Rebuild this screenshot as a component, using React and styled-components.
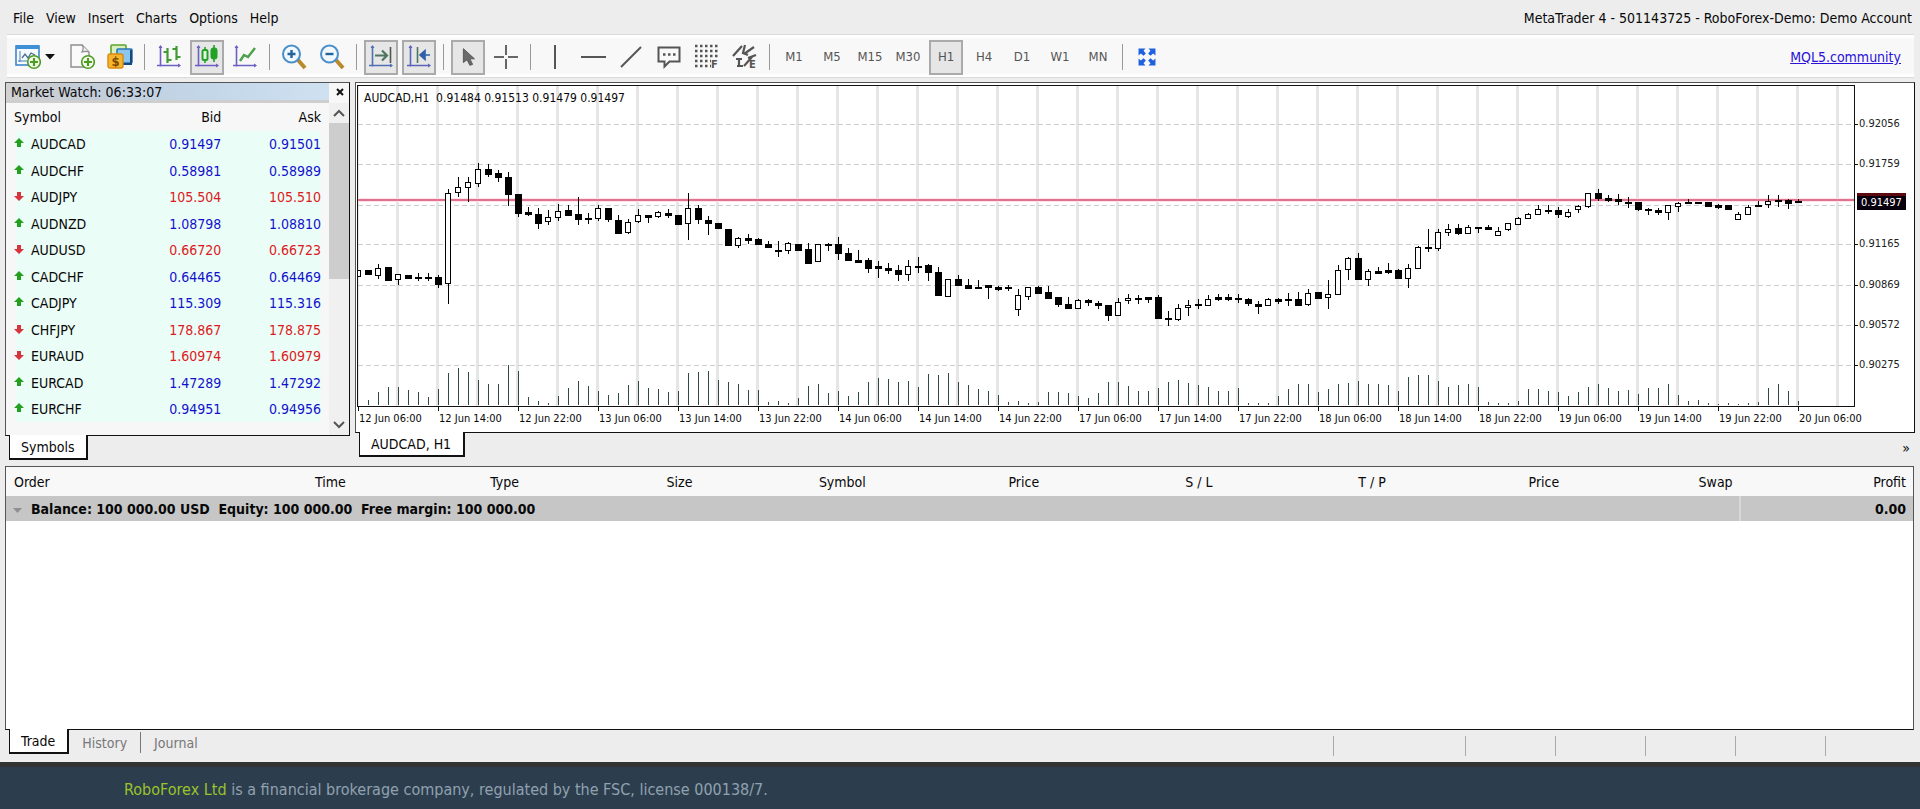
import React, { useState } from "react";
import styled, { createGlobalStyle } from "styled-components";

const GlobalStyle = createGlobalStyle`
  * {
    box-sizing: border-box;
  }

  body {
    margin: 0;
    background: #2c3e4e;
    color: #080808;
    font-family: "DejaVu Sans Condensed", "DejaVu Sans", Tahoma, sans-serif;
    font-size: 14px;
    line-height: 18px;
  }

  button {
    font: inherit;
    color: inherit;
    cursor: pointer;
  }
`;

const Page = styled.div`
  min-height: 100vh;
  display: flex;
  flex-direction: column;
`;

const Terminal = styled.main`
  flex: 1;
  display: flex;
  flex-direction: column;
  background: #ededed;
  border-bottom: 5px solid #333;
`;

const MenuBar = styled.header`
  height: 34px;
  display: flex;
  justify-content: space-between;
  align-items: center;
  padding: 2px 8px 0 7px;
`;

const Menu = styled.nav`
  display: flex;
`;

const MenuButton = styled.button`
  border: 0;
  background: none;
  padding: 0 6px;
`;

const Account = styled.span`
  white-space: nowrap;
`;

const Toolbar = styled.div`
  display: flex;
  align-items: center;
  gap: 4px;
  margin: 0 6px 4px 7px;
  padding: 3px 13px 1px 2px;
  height: 44px;
  background: #f8f8f8;
  border-top: 1px solid #dadada;
  border-bottom: 1px solid #dadada;
  box-shadow: inset 0 3px #fff, inset 0 -3px #fff;
`;

const ToolButton = styled.button`
  width: ${({ $wide }) => ($wide ? "52px" : "34px")};
  height: 35px;
  flex: none;
  display: flex;
  align-items: center;
  justify-content: center;
  gap: 4px;
  padding: 0;
  color: #555;
  border: ${({ $active }) => ($active ? "2px solid #aaa" : "0")};
  background: ${({ $active }) => ($active ? "#e6e6e6" : "none")};
`;

const TimeButton = styled(ToolButton)`
  font-size: 13px;
`;

const ToolSeparator = styled.span`
  width: 7px;
  height: 26px;
  flex: none;
  background: linear-gradient(#999, #999) center / 1px 100% no-repeat;
`;

const Community = styled.a`
  margin-left: auto;
  color: #2a12d8;
`;

const Workspace = styled.section`
  display: flex;
  align-items: flex-start;
  gap: 5px;
  padding: 0 5px;
  height: 384px;
`;

const Dock = styled.div`
  flex: ${({ $fill }) => ($fill ? "1" : "none")};
  width: ${({ $fill }) => ($fill ? "auto" : "345px")};
  min-width: 0;
`;

const Panel = styled.div`
  border: 1px solid #111;
  border-top-color: #555;
  border-left-color: #555;
`;

const WatchPanel = styled(Panel)`
  height: 354px;
  display: grid;
  grid-template-columns: 1fr 20px;
  grid-template-rows: 20px 1fr;
  background: #f7f7f7;
`;

const WatchTitle = styled.div`
  padding-left: 5px;
  background: linear-gradient(90deg, #d2d2d2 0, #c3ccd8 25%, #c2d6e8 60%, #cfe1f1 100%);
  border-bottom: 3px solid #cecece;
`;

const CloseButton = styled.button`
  display: flex;
  align-items: center;
  justify-content: center;
  border: 0;
  padding: 0 0 2px 2px;
  background: none;
`;

const QuoteTable = styled.table`
  width: 100%;
  height: fit-content;
  border-collapse: collapse;
  table-layout: fixed;

  th {
    height: 28px;
    padding: 0;
    font-weight: normal;
    text-align: right;
  }

  th:first-child {
    text-align: left;
    padding-left: 8px;
  }
`;

const QuoteRow = styled.tr`
  height: 26px;
  background: linear-gradient(#ebfdf7, #ebfdf7) 10px 0 / 305px 100% no-repeat;

  &:nth-child(even) {
    height: 27px;
  }
`;

const SymbolCell = styled.td`
  padding: 0 0 0 8px;

  svg {
    margin-right: 7px;
    vertical-align: 1px;
  }
`;

const PriceCell = styled.td`
  padding: 0;
  text-align: right;
  color: ${({ $up }) => ($up ? "#1212cc" : "#dc1a22")};

  & + & {
    padding-right: 8px;
  }
`;

const AskHead = styled.th`
  && {
    padding-right: 8px;
  }
`;

const Scrollbar = styled.div`
  display: flex;
  flex-direction: column;
  justify-content: space-between;
  align-items: center;
  background: #f0f0f0;
`;

const ScrollButton = styled.button`
  width: 20px;
  height: 20px;
  display: flex;
  align-items: center;
  justify-content: center;
  border: 0;
  padding: 0;
  background: none;
`;

const ScrollThumb = styled.div`
  width: 100%;
  height: 156px;
  margin-bottom: auto;
  background: #cdcdcd;
`;

const Tab = styled.button`
  height: 25px;
  margin: -1px 0 0 4px;
  padding: 0 12px 0 11px;
  background: #fff;
  border: 1px solid #111;
  border-width: 0 2px 2px 1px;
`;

const TabRow = styled.div`
  display: flex;
  justify-content: space-between;
  padding-right: 5px;
`;

const MoreButton = styled.button`
  border: 0;
  padding: 6px 0 0;
  background: none;
`;

const ChartPanel = styled(Panel)`
  height: 351px;
  padding: 2px 0 0 1px;
  background: #fff;
`;

const ChartGrid = styled.div`
  display: grid;
  grid-template-columns: 1fr 59px;
`;

const Plot = styled.div`
  position: relative;
  height: 322px;
  border: 1px solid #111;

  svg {
    display: block;
  }
`;

const PlotTitle = styled.div`
  position: absolute;
  top: 3px;
  left: 6px;
  font-size: 12px;
  white-space: pre;
`;

const TimeAxis = styled.div`
  display: flex;
  padding-left: 1px;
  overflow: hidden;
`;

const TimeLabel = styled.span`
  width: 80px;
  flex: none;
  height: 22px;
  padding: 3px 0 0 1px;
  font-size: 11px;
  white-space: nowrap;
  background: linear-gradient(#111, #111) 0 0 / 1px 4px no-repeat;
`;

const OrdersPanel = styled.section`
  flex: 1;
  margin: 0 6px 0 5px;
  background: #fff;
  border: 1px solid #555;
  border-bottom-color: #111;
`;

const OrdersTable = styled.table`
  width: 100%;
  table-layout: fixed;
  border-collapse: collapse;

  th {
    height: 29px;
    padding: 0 7px 0 0;
    text-align: right;
    font-weight: normal;
    background: #f8f8f8;
  }

  th:first-child {
    text-align: left;
    padding-left: 8px;
  }
`;

const BalanceRow = styled.tr`
  height: 25px;
  font-weight: bold;
  background: #c6c6c6;

  td {
    padding: 0 7px;
  }

  td:last-child {
    text-align: right;
    border-left: 2px solid #d8d8d8;
  }

  svg {
    margin-right: 9px;
  }
`;

const BottomBar = styled.div`
  display: flex;
  align-items: flex-start;
  height: 32px;
  padding: 0 5px;
`;

const PlainTab = styled.button`
  height: 21px;
  margin-top: 2px;
  padding: 0 13px;
  border: 0;
  border-right: ${({ $divided }) => ($divided ? "1px solid #777" : "0")};
  background: none;
  color: #777;
`;

const Status = styled.div`
  display: flex;
  margin: 6px 0 0 auto;
`;

const StatusCell = styled.span`
  width: ${({ $wide }) => ($wide ? "132px" : "90px")};
  height: 20px;
  border-left: 1px solid #aaa;
`;

const Footer = styled.footer`
  height: 42px;
  padding: 14px 124px 0;
  font-size: 16px;
  color: #91a1ae;

  a {
    color: #9ac32c;
    text-decoration: none;
  }
`;

const quotes = [
  ["AUDCAD", "0.91497", "0.91501", true],
  ["AUDCHF", "0.58981", "0.58989", true],
  ["AUDJPY", "105.504", "105.510", false],
  ["AUDNZD", "1.08798", "1.08810", true],
  ["AUDUSD", "0.66720", "0.66723", false],
  ["CADCHF", "0.64465", "0.64469", true],
  ["CADJPY", "115.309", "115.316", true],
  ["CHFJPY", "178.867", "178.875", false],
  ["EURAUD", "1.60974", "1.60979", false],
  ["EURCAD", "1.47289", "1.47292", true],
  ["EURCHF", "0.94951", "0.94956", true],
];

const orderColumns = ["Order", "Time", "Type", "Size", "Symbol", "Price", "S / L", "T / P", "Price", "Swap", "Profit"];

const timeframes = ["M1", "M5", "M15", "M30", "H1", "H4", "D1", "W1", "MN"];

const timeLabels = ["12", "13", "14", "17", "18", "19"]
  .flatMap((day) => ["06:00", "14:00", "22:00"].map((hour) => `${day} Jun ${hour}`))
  .concat("20 Jun 06:00");

const priceLevels = [
  [45, "0.92056"],
  [85, "0.91759"],
  [165, "0.91165"],
  [206, "0.90869"],
  [246, "0.90572"],
  [286, "0.90275"],
];

// [high, body top, body bottom, low, is falling]
const candles = [
  [190,190,196,196,0],[190,190,194,194,1],[184,188,195,198,0],[187,187,200,200,1],[194,194,199,204,0],
  [195,195,198,198,1],[193,197,198,200,1],[193,197,198,200,1],[195,197,204,207,1],[109,113,203,223,0],
  [97,107,112,116,0],[97,102,107,121,0],[83,89,103,106,0],[84,89,94,96,1],[90,93,97,101,1],
  [92,97,114,125,1],[114,114,133,136,1],[127,132,134,135,1],[128,134,143,148,1],[130,137,141,144,0],
  [124,131,137,140,0],[125,130,135,135,1],[117,134,139,144,1],[133,138,139,143,1],[125,128,138,140,0],
  [128,128,139,141,1],[135,140,153,153,1],[139,142,152,153,0],[129,135,141,142,0],[135,135,137,142,1],
  [131,132,136,137,0],[129,133,135,137,1],[135,135,144,144,1],[113,128,143,159,0],[125,128,139,143,1],
  [136,140,143,154,1],[143,143,148,148,1],[149,149,165,165,1],[157,158,165,167,0],[154,158,160,163,1],
  [158,159,164,164,1],[161,164,167,167,1],[161,170,171,176,1],[162,163,170,173,0],[164,164,170,170,1],
  [163,169,183,183,1],[164,164,181,181,0],[163,164,165,170,1],[157,164,173,179,1],[168,173,180,180,1],
  [170,180,182,182,1],[178,180,188,192,1],[181,186,188,197,1],[183,188,190,193,1],[185,190,194,200,1],
  [180,186,194,200,0],[177,186,187,192,1],[184,185,192,200,1],[187,192,215,215,1],[199,199,216,216,0],
  [195,199,205,205,1],[199,205,208,208,1],[200,207,208,208,1],[205,205,207,218,1],[206,207,209,210,1],
  [205,207,208,210,1],[209,215,229,235,0],[207,207,216,219,0],[206,207,213,213,1],[206,212,218,218,1],
  [217,217,224,226,1],[217,224,228,228,1],[219,220,228,228,0],[219,220,222,225,1],[221,223,225,228,1],
  [225,225,235,240,1],[218,222,235,235,0],[214,218,220,223,0],[215,218,219,223,1],[217,217,219,222,1],
  [215,217,238,238,1],[231,238,239,245,1],[224,228,239,240,0],[220,225,227,235,0],[219,224,225,228,1],
  [215,219,225,225,0],[214,217,219,220,1],[214,217,219,220,1],[214,218,219,222,1],[218,219,223,225,1],
  [221,224,226,233,1],[218,219,225,225,0],[218,219,221,223,1],[213,219,220,225,1],[212,219,225,225,1],
  [209,213,224,225,0],[212,212,218,218,1],[200,214,217,228,0],[185,190,214,214,0],[177,178,189,199,0],
  [173,178,199,199,1],[189,191,199,205,0],[187,191,193,193,1],[183,190,192,193,1],[189,190,198,198,1],
  [184,188,198,207,0],[166,167,188,188,0],[149,167,168,171,1],[149,152,168,170,0],[144,149,152,155,0],
  [144,148,153,154,1],[145,147,153,153,0],[147,147,148,152,1],[145,147,149,149,1],[147,151,155,155,0],
  [143,143,149,150,0],[137,138,144,144,0],[133,134,138,138,0],[125,129,134,134,0],[125,130,131,133,1],
  [127,130,134,137,1],[129,132,136,137,0],[125,126,129,132,0],[113,113,126,127,0],[109,113,118,120,1],
  [115,118,120,121,1],[114,119,121,124,1],[117,122,123,127,1],[122,122,129,130,1],[128,129,130,134,1],
  [128,130,132,134,1],[125,125,132,139,0],[122,123,126,131,0],[119,122,123,123,1],[122,122,123,123,1],
  [122,122,126,126,1],[124,125,127,128,1],[125,125,129,129,1],[132,134,139,139,0],[125,127,134,134,0],
  [121,125,126,126,1],[115,121,124,127,0],[115,120,121,126,1],[119,120,123,128,1],[119,121,122,122,1],
];

const volumes = [
  0,5,13,18,18,15,13,8,16,32,37,33,25,21,21,40,34,8,4,2,9,17,24,19,14,10,12,20,24,17,
  16,13,14,32,33,34,25,23,21,15,15,3,4,2,7,19,21,12,14,9,13,23,27,26,23,24,18,31,30,32,
  23,20,16,14,10,3,4,2,3,13,13,12,9,7,12,23,23,19,14,14,17,23,25,22,20,18,14,14,17,2,
  2,2,9,16,21,21,13,16,21,22,24,21,21,20,14,28,30,30,24,18,20,21,18,3,2,2,4,16,16,14,
  13,9,13,18,21,17,14,15,11,17,17,21,10,4,5,2,1,2,1,2,3,17,21,14,4,
];

const Chart = () => (
  <svg width="100%" height="320" role="img" aria-label="AUDCAD price chart">
    <defs>
      <pattern id="columns" x="-2" width="40" height="320" patternUnits="userSpaceOnUse">
        <rect width="3" height="320" fill="#e6e6e6" />
      </pattern>
    </defs>
    <rect width="100%" height="320" fill="url(#columns)" />
    {[45, 85, 126, 165, 206, 246, 286].map((y) => (
      <line key={y} x1="0" x2="100%" y1={y - 6.5} y2={y - 6.5} stroke="#ccc" strokeDasharray="5 3" />
    ))}
    <rect y="112" width="100%" height="4" fill="#fde3ea" />
    <rect y="113" width="100%" height="2" fill="#e0728f" />
    {volumes.map((height, i) => (
      <rect key={i} x={i * 10} y={319 - height} width="1" height={height} fill="#2f4a46" />
    ))}
    {candles.map(([high, top, bottom, low, falling], i) => (
      <g key={i} shapeRendering="crispEdges">
        <rect x={i * 10} y={high - 6} width="1" height={low - high + 1} fill="#000" />
        <rect x={i * 10 - 3} y={top - 6} width={falling ? 7 : 6} height={bottom - top + 1} fill="#000" />
        {!falling && (
          <rect x={i * 10 - 2} y={top - 5} width="4" height={Math.max(bottom - top - 1, 1)} fill="#fff" />
        )}
      </g>
    ))}
  </svg>
);

const PriceAxis = () => (
  <svg width="59" height="322" fontSize="11">
    {priceLevels.map(([y, label]) => (
      <g key={label}>
        <rect y={y - 6} width="3" height="1" fill="#111" />
        <text x="4" y={y - 3} fill="#222">{label}</text>
      </g>
    ))}
    <rect x="2" y="108" width="49" height="17" fill="#08000c" />
    <rect x="2" y="108" width="49" height="3" fill="#5c0a10" />
    <text x="6" y="121" fill="#fff">0.91497</text>
  </svg>
);

const Icon = ({ size = 26, children }) => (
  <svg width={size} height={size} viewBox="0 0 26 26" fill="none" aria-hidden="true">
    {children}
  </svg>
);

const PlusBadge = ({ x, y }) => (
  <g>
    <circle cx={x} cy={y} r="6.3" fill="#f2fbe9" stroke="#4f9b25" strokeWidth="1.6" />
    <path d={`M${x - 4} ${y}h8M${x} ${y - 4}v8`} stroke="#4f9b25" strokeWidth="2.2" />
  </g>
);

const Axes = ({ children, color = "#6d5fc4" }) => (
  <Icon>
    <path d="M4.500 2v20.500M1 21.500h23" stroke={color} strokeWidth="1.6" />
    <path d="M4.500 1l-2 3h4zM25 21.500l-3 -2v4z" fill={color} />
    {children}
  </Icon>
);

const NewChartIcon = () => (
  <>
    <Icon>
      <rect x="1" y="2" width="23" height="19" fill="#f4faff" stroke="#3f86c8" strokeWidth="1.6" />
      <rect x="1" y="1" width="23" height="4" fill="#3f8fd6" />
      <path d="M5 7v11M3 17h15" stroke="#4a7fb0" />
      <path d="M7 14l3-4 3 4 3-5 4 2" stroke="#4a6f90" strokeWidth="1.3" />
      <PlusBadge x={19} y={18} />
    </Icon>
    <svg width="10" height="6" viewBox="0 0 10 6" aria-hidden="true">
      <path d="M0 0h10l-5 5.500z" fill="#111" />
    </svg>
  </>
);

const NewOrderIcon = () => (
  <Icon>
    <path d="M2 1h11l7 7v15h-18z" fill="#fafafa" stroke="#8d8d8d" strokeWidth="1.4" />
    <path d="M13 1c2 2 1 5 0 7 3-1 5-1 7 0" fill="#eee" stroke="#8d8d8d" strokeWidth="1.2" />
    <PlusBadge x={19} y={18} />
  </Icon>
);

const AccountsIcon = () => (
  <Icon>
    <rect x="4" y="1" width="15" height="12" rx="1" fill="#d8f0c0" stroke="#5da32b" strokeWidth="1.6" />
    <rect x="10" y="5" width="15" height="14" rx="1" fill="#8cc6ee" stroke="#2b77b5" strokeWidth="1.6" />
    <path d="M24 6v14h-12" stroke="#174a7a" strokeWidth="2" />
    <rect x="1" y="10" width="15" height="14" rx="2" fill="#f6b52c" stroke="#d98a12" strokeWidth="1.4" />
    <text x="4.500" y="21.500" fontSize="13" fontWeight="bold" fill="#7c4a00">$</text>
  </Icon>
);

const BarsIcon = () => (
  <Axes>
    <path d="M11.500 4v15M11.500 8h-4M11.500 16h4M20.500 2v14M20.500 5h-4M20.500 13h4" stroke="#3f9b32" strokeWidth="2.2" />
  </Axes>
);

const CandlesIcon = () => (
  <Axes>
    <path d="M11 3v16M20 1v17" stroke="#23a127" strokeWidth="1.6" />
    <rect x="8.500" y="6" width="5" height="10" rx="1.500" fill="#e2f7e0" stroke="#23a127" strokeWidth="2" />
    <rect x="17" y="4" width="6" height="11" rx="2" fill="#23a127" stroke="#23a127" />
  </Axes>
);

const LineIcon = () => (
  <Axes>
    <path d="M8 17l4-6 4 2 7-9" stroke="#4aa14a" strokeWidth="2.4" />
  </Axes>
);

const ZoomIcon = ({ plus }) => (
  <Icon>
    <path d="M17 16l7 8" stroke="#b98a2c" strokeWidth="4" />
    <circle cx="10.500" cy="10" r="8.500" fill="#f1f9ff" stroke="#4a8fca" strokeWidth="2" />
    <path d={plus ? "M6.500 10h8M10.500 6v8" : "M6.500 10h8"} stroke="#23649c" strokeWidth="2.4" />
  </Icon>
);

const ScrollEndIcon = () => (
  <Axes color="#4f6fb4">
    <path d="M7 11.500h12M14 6.500l5 5-5 5" stroke="#4f7460" strokeWidth="2.2" />
    <path d="M22.500 3v16" stroke="#555" strokeWidth="1.6" />
  </Axes>
);

const ShiftIcon = () => (
  <Axes color="#5c63bb">
    <path d="M11.500 3v16" stroke="#4f7460" strokeWidth="1.6" />
    <path d="M15 11h9M19 6.500l-5 4.500 5 4.500z" fill="#315fa8" stroke="#315fa8" strokeWidth="1.600" />
  </Axes>
);

const CursorIcon = () => (
  <Icon size={24}>
    <path d="M8 4v15l4-3 3 6 3-1-3-6h5z" fill="#6a6a6a" stroke="#555" />
  </Icon>
);

const CrosshairIcon = () => (
  <Icon>
    <path d="M13 1v10M13 15v10M1 13h10M15 13h10" stroke="#666" strokeWidth="2" />
  </Icon>
);

const LineTool = ({ d }) => (
  <Icon>
    <path d={d} stroke="#555" strokeWidth="2" />
  </Icon>
);

const CommentIcon = () => (
  <Icon>
    <path d="M2.500 3.500h21v14h-10l-5 5v-5h-6z" stroke="#555" strokeWidth="2" />
    <path d="M7 10.500h2.500M12 10.500h2.500M17 10.500h2.500" stroke="#555" strokeWidth="2.500" />
  </Icon>
);

const FiboIcon = () => (
  <Icon>
    <path d="M1 2h24M1 7h24M1 12h24M1 17h16M1 22h16" stroke="#555" strokeWidth="2.400" strokeDasharray="2.500 2.500" />
    <text x="17" y="24" fontSize="11" fontWeight="bold" fill="#555">F</text>
  </Icon>
);

const ShapesIcon = () => (
  <Icon>
    <path d="M1 12l9-10M13 1l-2 8 5 2M12 10l10-7M16 14l8-3M7 14v9M4 15h6M5 22h6M12 22l8-9" stroke="#555" strokeWidth="2.200" />
    <text x="17" y="24" fontSize="11" fontWeight="bold" fill="#555">E</text>
  </Icon>
);

const FullscreenIcon = () => (
  <Icon size={20}>
    <path d="M2 2h9l-2.500 3 3 3.500-3 3-3.500-3L2 11zM24 2v9l-3-2.500-3.500 3-3-3 3-3.500L15 2zM2 24v-9l3 2.500 3.500-3 3 3-3 3.500L11 24zM24 24h-9l2.500-3-3-3.500 3-3 3.500 3L24 15z" fill="#1f62e0" />
  </Icon>
);

const chartTypes = [
  ["Bar chart", BarsIcon],
  ["Candlesticks", CandlesIcon],
  ["Line chart", LineIcon],
];

const objectTools = [
  ["Vertical line", <LineTool d="M13 1v24" />],
  ["Horizontal line", <LineTool d="M1 13h25" />],
  ["Trendline", <LineTool d="M3 23L23 3" />],
  ["Text label", <CommentIcon />],
  ["Fibonacci", <FiboIcon />],
  ["Shapes", <ShapesIcon />],
];

const Arrow = ({ up }) => (
  <svg width="10" height="10" viewBox="0 0 10 10" aria-hidden="true">
    <path
      d={up ? "M5 0l5 5h-3v4h-4v-4h-3z" : "M5 10l5-5h-3v-4h-4v4h-3z"}
      fill={up ? "#25a01e" : "#d8333c"}
    />
  </svg>
);

const App = () => {
  const [frame, setFrame] = useState("H1");
  const [chartType, setChartType] = useState("Candlesticks");

  return (
    <Page>
      <GlobalStyle />
      <Terminal>
        <MenuBar>
          <Menu>
            {["File", "View", "Insert", "Charts", "Options", "Help"].map((item) => (
              <MenuButton key={item}>{item}</MenuButton>
            ))}
          </Menu>
          <Account>MetaTrader 4 - 501143725 - RoboForex-Demo: Demo Account</Account>
        </MenuBar>

        <Toolbar>
          <ToolButton $wide aria-label="New chart"><NewChartIcon /></ToolButton>
          <ToolButton aria-label="New order"><NewOrderIcon /></ToolButton>
          <ToolButton aria-label="Accounts"><AccountsIcon /></ToolButton>
          <ToolSeparator />
          {chartTypes.map(([name, Drawing]) => (
            <ToolButton key={name} aria-label={name} $active={chartType === name} onClick={() => setChartType(name)}>
              <Drawing />
            </ToolButton>
          ))}
          <ToolSeparator />
          <ToolButton aria-label="Zoom in"><ZoomIcon plus /></ToolButton>
          <ToolButton aria-label="Zoom out"><ZoomIcon /></ToolButton>
          <ToolSeparator />
          <ToolButton aria-label="Auto scroll" $active><ScrollEndIcon /></ToolButton>
          <ToolButton aria-label="Chart shift" $active><ShiftIcon /></ToolButton>
          <ToolSeparator />
          <ToolButton aria-label="Cursor" $active><CursorIcon /></ToolButton>
          <ToolButton aria-label="Crosshair"><CrosshairIcon /></ToolButton>
          <ToolSeparator />
          {objectTools.map(([name, icon]) => (
            <ToolButton key={name} aria-label={name}>{icon}</ToolButton>
          ))}
          <ToolSeparator />
          {timeframes.map((item) => (
            <TimeButton key={item} $active={frame === item} onClick={() => setFrame(item)}>
              {item}
            </TimeButton>
          ))}
          <ToolSeparator />
          <ToolButton aria-label="Full screen"><FullscreenIcon /></ToolButton>
          <Community href="#community">MQL5.community</Community>
        </Toolbar>

        <Workspace>
          <Dock>
            <WatchPanel>
              <WatchTitle>Market Watch: 06:33:07</WatchTitle>
              <CloseButton aria-label="Close">
                <svg width="8" height="8" viewBox="0 0 8 8">
                  <path d="M1 1l6 6M7 1l-6 6" stroke="#111" strokeWidth="2" />
                </svg>
              </CloseButton>
              <QuoteTable>
                <thead>
                  <tr>
                    <th>Symbol</th>
                    <th>Bid</th>
                    <AskHead>Ask</AskHead>
                  </tr>
                </thead>
                <tbody>
                  {quotes.map(([symbol, bid, ask, up]) => (
                    <QuoteRow key={symbol}>
                      <SymbolCell><Arrow up={up} />{symbol}</SymbolCell>
                      <PriceCell $up={up}>{bid}</PriceCell>
                      <PriceCell $up={up}>{ask}</PriceCell>
                    </QuoteRow>
                  ))}
                </tbody>
              </QuoteTable>
              <Scrollbar>
                <ScrollButton aria-label="Scroll up">
                  <svg width="12" height="8" viewBox="0 0 12 8">
                    <path d="M1 7l5-5 5 5" fill="none" stroke="#555" strokeWidth="2" />
                  </svg>
                </ScrollButton>
                <ScrollThumb />
                <ScrollButton aria-label="Scroll down">
                  <svg width="12" height="8" viewBox="0 0 12 8">
                    <path d="M1 1l5 5 5-5" fill="none" stroke="#555" strokeWidth="2" />
                  </svg>
                </ScrollButton>
              </Scrollbar>
            </WatchPanel>
            <Tab>Symbols</Tab>
          </Dock>

          <Dock $fill>
            <ChartPanel>
              <ChartGrid>
                <Plot>
                  <Chart />
                  <PlotTitle>{"AUDCAD,H1  0.91484 0.91513 0.91479 0.91497"}</PlotTitle>
                </Plot>
                <PriceAxis />
              </ChartGrid>
              <TimeAxis>
                {timeLabels.map((label) => (
                  <TimeLabel key={label}>{label}</TimeLabel>
                ))}
              </TimeAxis>
            </ChartPanel>
            <TabRow>
              <Tab>AUDCAD, H1</Tab>
              <MoreButton aria-label="More charts">»</MoreButton>
            </TabRow>
          </Dock>
        </Workspace>

        <OrdersPanel>
          <OrdersTable>
            <thead>
              <tr>
                {orderColumns.map((column, index) => (
                  <th key={index}>{column}</th>
                ))}
              </tr>
            </thead>
            <tbody>
              <BalanceRow>
                <td colSpan={10}>
                  <svg width="9" height="6" viewBox="0 0 9 6" aria-hidden="true">
                    <path d="M0 0h9l-4.500 5z" fill="#8f8f8f" />
                  </svg>
                  Balance: 100 000.00 USD &nbsp;Equity: 100 000.00 &nbsp;Free margin: 100 000.00
                </td>
                <td>0.00</td>
              </BalanceRow>
            </tbody>
          </OrdersTable>
        </OrdersPanel>

        <BottomBar>
          <Tab>Trade</Tab>
          <PlainTab $divided>History</PlainTab>
          <PlainTab>Journal</PlainTab>
          <Status>
            <StatusCell $wide />
            <StatusCell />
            <StatusCell />
            <StatusCell />
            <StatusCell />
            <StatusCell />
          </Status>
        </BottomBar>
      </Terminal>
      <Footer>
        <a href="#roboforex">RoboForex Ltd</a> is a financial brokerage company, regulated by the FSC, license 000138/7.
      </Footer>
    </Page>
  );
};

export default App;
